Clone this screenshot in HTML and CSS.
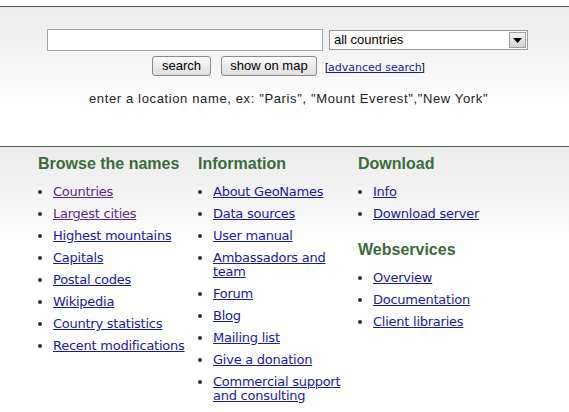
FILE: index.html
```html
<!DOCTYPE html>
<html>
<head>
<meta charset="utf-8">
<link rel="stylesheet" href="styles.css">
</head>
<body>
<div class="search-box">
  <form class="search-form">
    <div class="row row-inputs">
      <input class="q" type="text">
      <div class="select">
        <span class="select-label">all countries</span>
        <span class="select-btn"><svg width="9" height="5" viewBox="0 0 9 5"><path d="M0 0H9L4.5 5Z" fill="#000"/></svg></span>
      </div>
    </div>
    <div class="row row-buttons">
      <button type="button" class="btn btn-search">search</button>
      <button type="button" class="btn btn-map">show on map</button>
      <span class="adv">[<a href="#">advanced search</a>]</span>
    </div>
    <p class="hint">enter a location name, ex: "Paris", "Mount Everest","New York"</p>
  </form>
</div>
<div class="links">
  <div class="col">
    <h2>Browse the names</h2>
    <ul>
      <li><a class="visited" href="#">Countries</a></li>
      <li><a class="visited" href="#">Largest cities</a></li>
      <li><a href="#">Highest mountains</a></li>
      <li><a href="#">Capitals</a></li>
      <li><a href="#">Postal codes</a></li>
      <li><a href="#">Wikipedia</a></li>
      <li><a href="#">Country statistics</a></li>
      <li><a href="#">Recent modifications</a></li>
    </ul>
  </div>
  <div class="col">
    <h2>Information</h2>
    <ul>
      <li><a href="#">About GeoNames</a></li>
      <li><a href="#">Data sources</a></li>
      <li><a href="#">User manual</a></li>
      <li><a href="#">Ambassadors and team</a></li>
      <li><a href="#">Forum</a></li>
      <li><a href="#">Blog</a></li>
      <li><a href="#">Mailing list</a></li>
      <li><a href="#">Give a donation</a></li>
      <li><a href="#">Commercial support and consulting</a></li>
    </ul>
  </div>
  <div class="col">
    <h2>Download</h2>
    <ul>
      <li><a href="#">Info</a></li>
      <li><a href="#">Download server</a></li>
    </ul>
    <h2 class="second">Webservices</h2>
    <ul>
      <li><a href="#">Overview</a></li>
      <li><a href="#">Documentation</a></li>
      <li><a href="#">Client libraries</a></li>
    </ul>
  </div>
</div>
</body>
</html>
```
FILE: styles.css
```css
html, body {
  margin: 0;
  padding: 0;
  background: #fff;
}
body {
  font-family: "DejaVu Sans", Verdana, sans-serif;
  font-size: 13px;
  color: #000;
}
.search-box {
  margin-top: 6px;
  border-top: 1px solid #4d5d4d;
  height: 139px;
  background: linear-gradient(#ececec 0px, #f4f4f4 50px, #fff 100px);
  font-family: "Liberation Sans", Arial, sans-serif;
}
.search-form {
  margin: 0;
  padding-top: 22px;
}
.row {
  display: flex;
  align-items: center;
}
.row-inputs {
  padding-left: 47px;
  gap: 6px;
  align-items: flex-start;
}
.q {
  box-sizing: border-box;
  width: 276px;
  height: 22px;
  margin: 0;
  border: 1px solid #a5a5a5;
  background: #fff;
  padding: 0 3px;
}
.select {
  box-sizing: border-box;
  width: 199px;
  height: 20px;
  margin-top: 1px;
  border: 1px solid #9a9a9a;
  background: #fff;
  display: flex;
  align-items: stretch;
}
.select-label {
  flex: 1;
  font-size: 13px;
  line-height: 18px;
  padding-left: 4px;
}
.select-btn {
  box-sizing: border-box;
  width: 17px;
  margin: 1px;
  border: 1px solid #a0a0a0;
  background: linear-gradient(#f2f2f2, #d4d4d4);
  display: flex;
  align-items: center;
  justify-content: center;
}
.row-buttons {
  padding-left: 152px;
  margin-top: 5px;
}
.btn {
  box-sizing: border-box;
  height: 20px;
  margin: 0;
  padding: 0 8px;
  border: 1px solid #8a8a8a;
  border-radius: 3px;
  background: linear-gradient(#fbfbfb, #dedede);
  font-family: "Liberation Sans", Arial, sans-serif;
  font-size: 13px;
  color: #000;
  line-height: 18px;
}
.btn-search {
  width: 59px;
}
.btn-map {
  width: 96px;
  margin-left: 10px;
}
.adv {
  margin-left: 8px;
  font-size: 11px;
  padding-top: 2px;
}
.adv a {
  font-family: "DejaVu Sans", Verdana, sans-serif;
  font-size: 11px;
  color: #1a1aa0;
}
.hint {
  margin: 15px 0 0 89px;
  font-size: 13px;
  letter-spacing: 0.63px;
  color: #222;
  line-height: 16px;
}
.links {
  border-top: 1px solid #4d5d4d;
  background: linear-gradient(#ececec 0px, #f4f4f4 50px, #fff 100px);
  display: flex;
  padding: 7px 0 0 38px;
  min-height: 258px;
}
.col {
  width: 160px;
}
h2 {
  margin: 0;
  font-family: "Liberation Sans", Arial, sans-serif;
  font-size: 16px;
  font-weight: bold;
  line-height: 20px;
  color: #3b6b3b;
}
h2.second {
  margin-top: 19px;
}
ul {
  margin: 11px 0 0 0;
  padding-left: 15px;
  list-style: disc;
  color: #333;
}
li {
  line-height: 14px;
  margin-bottom: 8px;
  letter-spacing: -0.25px;
}
li a {
  color: #1a1aa0;
}
li a.visited {
  color: #5a2a86;
}
```
